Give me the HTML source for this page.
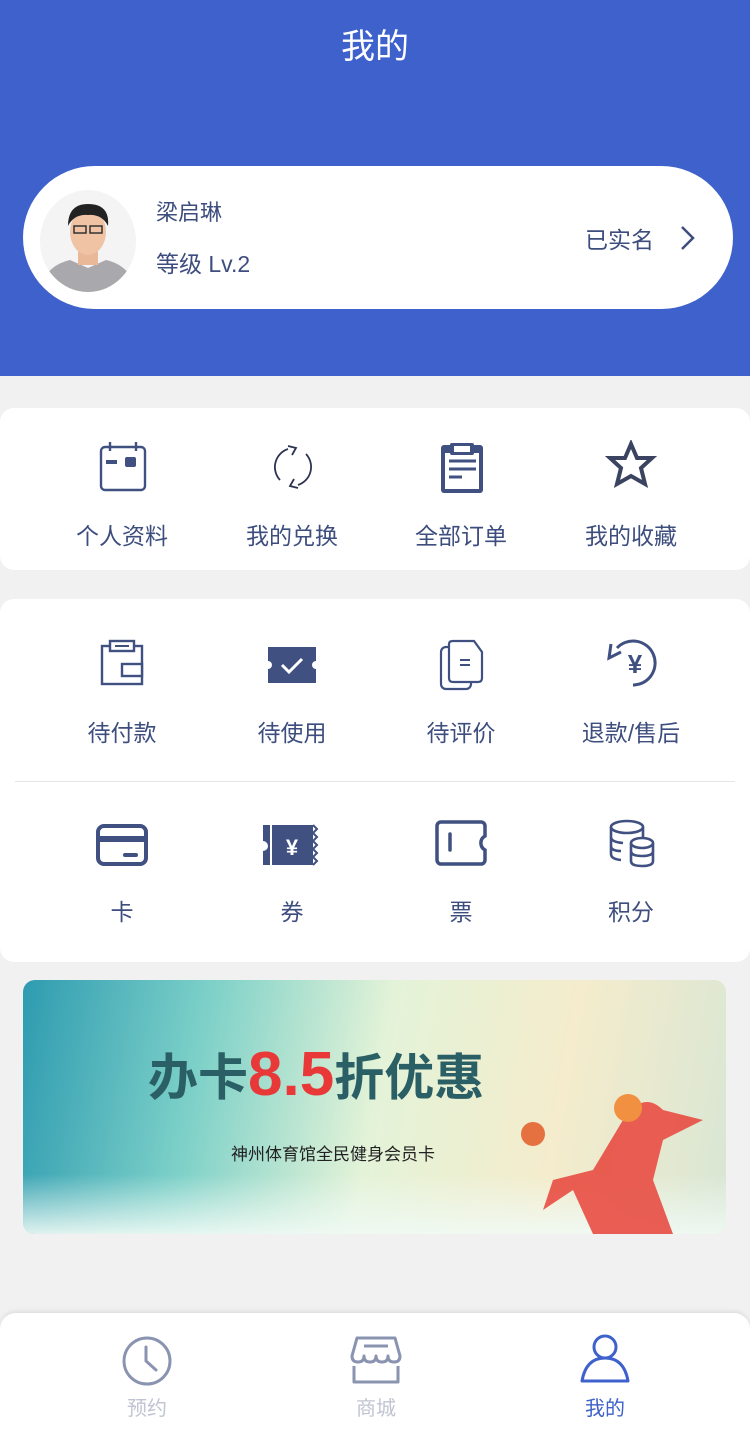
<!DOCTYPE html>
<html><head><meta charset="utf-8"><style>
*{margin:0;padding:0;box-sizing:border-box}
body{width:750px;height:1436px;background:#f1f1f1;font-family:"Liberation Sans","Noto Sans CJK SC",sans-serif;position:relative;overflow:hidden;color:#3d4d7e}
.hdr{position:absolute;left:0;top:0;width:750px;height:376px;background:#3e61cc}
.title{position:absolute;top:19px;width:750px;text-align:center;color:#fff;font-size:34px}
.pc{position:absolute;left:23px;top:166px;width:710px;height:143px;background:#fff;border-radius:72px}
.av{position:absolute;left:40px;top:190px;width:96px;height:102px;border-radius:50%;overflow:hidden;background:#fff}
.name{position:absolute;left:156px;top:195px;font-size:22px;color:#3d4d7e}
.lv{position:absolute;left:156px;top:245px;font-size:23px;color:#3d4d7e}
.rn{position:absolute;left:585px;top:221px;font-size:23px;color:#3d4d7e}
.card{position:absolute;left:0;width:750px;background:#fff;border-radius:14px}
.it{position:absolute;width:170px;text-align:center;font-size:23px;color:#3d4d7e}
.ic{position:absolute}
.tab{position:absolute;left:0;top:1313px;width:750px;height:123px;background:#fff;border-radius:16px 16px 0 0;box-shadow:0 -2px 4px rgba(0,0,0,.08)}
.tl{position:absolute;top:1392px;width:120px;text-align:center;font-size:20px}
</style></head><body>
<div class="hdr"></div>
<div class="title">我的</div>
<div class="pc"></div>
<div class="av"><svg width="96" height="102" viewBox="0 0 96 102"><rect width="96" height="102" fill="#f4f4f4"/><path d="M0 102 Q4 76 30 70 L48 78 L66 70 Q92 76 96 102Z" fill="#a9a9ad"/><rect x="38" y="55" width="20" height="20" fill="#e8b899"/><ellipse cx="48" cy="42" rx="18" ry="23" fill="#efc3a4"/><path d="M28 36 Q28 14 48 14 Q70 14 68 36 Q62 24 48 25 Q34 24 28 36Z" fill="#222"/><rect x="34" y="36" width="12" height="7" fill="none" stroke="#333" stroke-width="1.5"/><rect x="50" y="36" width="12" height="7" fill="none" stroke="#333" stroke-width="1.5"/></svg></div>
<div class="name">梁启琳</div>
<div class="lv">等级 Lv.2</div>
<div class="rn">已实名</div>
<svg class="ic" style="left:678px;top:224px" width="20" height="28"><path d="M4 3 L15 14 L4 25" fill="none" stroke="#3d4d7e" stroke-width="2.5"/></svg>

<div class="card" style="top:408px;height:162px"></div>
<svg class="ic" style="left:98px;top:440px" width="50" height="54" viewBox="0 0 50 54"><rect x="3" y="7" width="44" height="43" rx="4" fill="none" stroke="#3f5081" stroke-width="2.4"/><path d="M12 2v9M38 2v9" stroke="#3f5081" stroke-width="2.4"/><path d="M8 22h11" stroke="#3f5081" stroke-width="4"/><rect x="27" y="17" width="11" height="10" rx="2" fill="#3f5081"/></svg>
<svg class="ic" style="left:268px;top:442px" width="50" height="50" viewBox="0 0 50 50"><path d="M12 38 A19 19 0 0 1 20 7" fill="none" stroke="#2b3350" stroke-width="1.8"/><path d="M38 12 A19 19 0 0 1 30 43" fill="none" stroke="#2b3350" stroke-width="1.8"/><path d="M20 4 L28 6 L24 13" fill="none" stroke="#2b3350" stroke-width="1.8"/><path d="M30 46 L22 44 L26 37" fill="none" stroke="#2b3350" stroke-width="1.8"/></svg>
<svg class="ic" style="left:438px;top:440px" width="48" height="56" viewBox="0 0 48 56"><rect x="3" y="5" width="42" height="48" rx="3" fill="#3f5081"/><rect x="7" y="13" width="34" height="36" fill="#fff"/><rect x="12" y="3" width="24" height="12" rx="2" fill="#3f5081"/><rect x="16" y="6" width="16" height="6" fill="#fff"/><path d="M11 21h27M11 29h27M11 37h13" stroke="#3f5081" stroke-width="3"/></svg>
<svg class="ic" style="left:605px;top:440px" width="52" height="52" viewBox="0 0 52 52"><path d="M26 4 L32 18 L47 18 L36 28 L40 44 L26 36 L12 44 L16 28 L5 18 L20 18Z" fill="none" stroke="#3a4360" stroke-width="4" stroke-linejoin="miter"/></svg>
<div class="it" style="left:37px;top:517px">个人资料</div>
<div class="it" style="left:207px;top:517px">我的兑换</div>
<div class="it" style="left:376px;top:517px">全部订单</div>
<div class="it" style="left:546px;top:517px">我的收藏</div>

<div class="card" style="top:599px;height:363px"></div>
<div style="position:absolute;left:15px;top:781px;width:720px;height:1px;background:#e6e6e6"></div>
<svg class="ic" style="left:98px;top:638px" width="48" height="50" viewBox="0 0 48 50"><rect x="4" y="8" width="40" height="38" fill="none" stroke="#3f5081" stroke-width="2.4"/><rect x="12" y="3" width="24" height="10" fill="#fff" stroke="#3f5081" stroke-width="2.4"/><path d="M17 8h14" stroke="#3f5081" stroke-width="2"/><rect x="24" y="26" width="20" height="12" fill="#fff" stroke="#3f5081" stroke-width="2.4"/></svg>
<svg class="ic" style="left:266px;top:645px" width="52" height="40" viewBox="0 0 52 40"><path d="M2 2h48v14a4 4 0 0 0 0 8v14H2V24a4 4 0 0 0 0-8Z" fill="#3f5081"/><path d="M16 20l7 7 13-13" fill="none" stroke="#fff" stroke-width="3"/></svg>
<svg class="ic" style="left:438px;top:638px" width="48" height="54" viewBox="0 0 48 54"><rect x="3" y="9" width="30" height="42" rx="5" fill="none" stroke="#3f5081" stroke-width="2.2"/><path d="M11 6 Q11 3 15 3 H36 L44 14 V40 Q44 44 40 44 H15 Q11 44 11 40Z" fill="#fff" stroke="#3f5081" stroke-width="2.2"/><path d="M22 22h10M22 27h10" stroke="#3f5081" stroke-width="2"/></svg>
<svg class="ic" style="left:603px;top:636px" width="58" height="56" viewBox="0 0 58 56"><path d="M14 12 A22 22 0 1 1 30 49" fill="none" stroke="#3f5081" stroke-width="3"/><path d="M8 8 L6 22 L18 16" fill="none" stroke="#3f5081" stroke-width="3"/><text x="32" y="37" text-anchor="middle" font-size="26" font-weight="bold" fill="#3f5081" font-family="Liberation Sans">¥</text></svg>
<div class="it" style="left:37px;top:714px">待付款</div>
<div class="it" style="left:207px;top:714px">待使用</div>
<div class="it" style="left:376px;top:714px">待评价</div>
<div class="it" style="left:546px;top:714px">退款/售后</div>

<svg class="ic" style="left:95px;top:823px" width="54" height="44" viewBox="0 0 54 44"><rect x="3" y="3" width="48" height="38" rx="6" fill="none" stroke="#3f5081" stroke-width="4"/><path d="M3 16h48" stroke="#3f5081" stroke-width="6"/><path d="M30 32h11" stroke="#3f5081" stroke-width="4" stroke-linecap="round"/></svg>
<svg class="ic" style="left:261px;top:823px" width="60" height="44" viewBox="0 0 60 44"><path d="M2 2h50v40H2V28a3 3 0 0 0 0-10Z" fill="#3f5081"/><path d="M52 2 l4 4-4 4 4 4-4 4 4 4-4 4 4 4-4 4 4 4-4 4" fill="none" stroke="#3f5081" stroke-width="2"/><path d="M10 2v40" stroke="#fff" stroke-width="2"/><text x="31" y="32" text-anchor="middle" font-size="22" font-weight="bold" fill="#fff" font-family="Liberation Sans">¥</text></svg>
<svg class="ic" style="left:435px;top:820px" width="54" height="46" viewBox="0 0 54 46"><path d="M6 2h40a4 4 0 0 1 4 4v10a8 8 0 0 0 0 14v10a4 4 0 0 1-4 4H6a4 4 0 0 1-4-4V6a4 4 0 0 1 4-4Z" fill="none" stroke="#3f5081" stroke-width="3.5"/><path d="M15 14v16" stroke="#3f5081" stroke-width="3.5" stroke-linecap="round"/></svg>
<svg class="ic" style="left:607px;top:818px" width="50" height="50" viewBox="0 0 50 50"><ellipse cx="20" cy="9" rx="16" ry="6" fill="none" stroke="#3f5081" stroke-width="2.6"/><path d="M4 9v27q0 5 10 6M4 19q0 5 12 6M4 28q0 5 10 5M36 9v10" fill="none" stroke="#3f5081" stroke-width="2.6"/><ellipse cx="35" cy="25" rx="11" ry="5" fill="#fff" stroke="#3f5081" stroke-width="2.6"/><path d="M24 25v18q0 5 11 5t11-5V25M24 33q0 5 11 5t11-5" fill="none" stroke="#3f5081" stroke-width="2.6"/></svg>
<div class="it" style="left:37px;top:893px">卡</div>
<div class="it" style="left:207px;top:893px">券</div>
<div class="it" style="left:376px;top:893px">票</div>
<div class="it" style="left:546px;top:893px">积分</div>

<div style="position:absolute;left:23px;top:980px;width:703px;height:254px;border-radius:12px;overflow:hidden;background:linear-gradient(100deg,#2e9bb0 0%,#7cd0c8 25%,#e4f3d8 50%,#f4eccc 75%,#d8e6d4 100%)">
<div style="position:absolute;left:0;bottom:0;width:703px;height:60px;background:linear-gradient(180deg,rgba(255,255,255,0),rgba(240,250,245,.9))"></div>
<div style="position:absolute;left:125px;top:58px;font-size:50px;font-weight:bold;color:#2b5f66;white-space:nowrap">办卡<span style="color:#e83838;font-size:62px">8.5</span>折优惠</div>
<div style="position:absolute;left:208px;top:160px;font-size:17px;color:#222">神州体育馆全民健身会员卡</div>
<svg style="position:absolute;left:490px;top:100px" width="210" height="154"><circle cx="20" cy="54" r="12" fill="#e57040"/><path d="M110 40 Q130 10 150 30 L190 40 L150 60 L140 100 L160 154 L80 154 L60 110 L30 130 L40 100 L80 90 Z" fill="#e84c42" opacity=".9"/><circle cx="115" cy="28" r="14" fill="#f09040"/></svg>
</div>

<div class="tab"></div>
<svg class="ic" style="left:121px;top:1335px" width="52" height="52" viewBox="0 0 52 52"><circle cx="26" cy="26" r="23" fill="none" stroke="#8a93b0" stroke-width="3"/><path d="M25 12v14l10 9" fill="none" stroke="#8a93b0" stroke-width="3" stroke-linecap="round"/></svg>
<svg class="ic" style="left:349px;top:1336px" width="54" height="50" viewBox="0 0 54 50"><path d="M8 2h38l5 18q0 6-6 6-6 0-6-6q0 6-6 6t-6-6q0 6-6 6t-6-6q0 6-6 6t-6-6Z" fill="none" stroke="#8a93b0" stroke-width="3" stroke-linejoin="round"/><path d="M15 10h24" stroke="#8a93b0" stroke-width="3"/><path d="M5 30v16h44V30" fill="none" stroke="#8a93b0" stroke-width="3" stroke-linejoin="round"/></svg>
<svg class="ic" style="left:578px;top:1334px" width="54" height="52" viewBox="0 0 54 52"><circle cx="27" cy="13" r="11" fill="none" stroke="#3e61cc" stroke-width="3"/><path d="M4 47 Q8 24 27 24 Q46 24 50 47Z" fill="none" stroke="#3e61cc" stroke-width="3" stroke-linejoin="round"/></svg>
<div class="tl" style="left:87px;color:#c0c4d2">预约</div>
<div class="tl" style="left:316px;color:#c0c4d2">商城</div>
<div class="tl" style="left:545px;color:#3e61cc">我的</div>
</body></html>
